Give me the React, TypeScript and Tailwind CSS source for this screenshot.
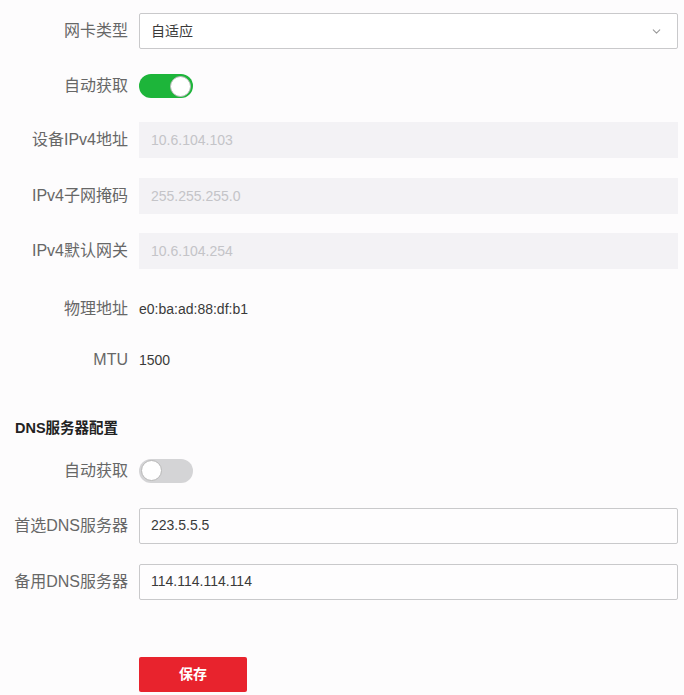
import { ChevronDown } from "lucide-react";

const cjk = "font-['Liberation_Sans','Noto_Sans_CJK_SC',sans-serif]";

function Label({ children }: { children: React.ReactNode }) {
  return (
    <div className="w-[139px] shrink-0 pr-[11px] text-right text-[16px] text-[#676767]">
      {children}
    </div>
  );
}

function Toggle({ on }: { on: boolean }) {
  return (
    <div
      className={
        on
          ? "flex h-[24px] w-[54px] items-center justify-end rounded-full bg-[#1db53a] px-[2px]"
          : "flex h-[24px] w-[54px] items-center justify-start rounded-full bg-[#d4d4d6] px-[2px]"
      }
    >
      <div className="h-[21px] w-[21px] rounded-full border border-[#b8b8b8] bg-white" />
    </div>
  );
}

function TextBox({ value }: { value: string }) {
  return (
    <div className="flex h-[36px] flex-1 items-center rounded-[2px] border border-[#c9c9cb] bg-[#fefdfe] pl-[11px] text-[14px] text-[#3a3a3a]">
      {value}
    </div>
  );
}

function Disabled({ value }: { value: string }) {
  return (
    <div className="flex h-[36px] flex-1 items-center bg-[#f3f2f5] pl-[12px] text-[14px] text-[#c4c4c8]">
      {value}
    </div>
  );
}

export default function App() {
  return (
    <div className={`min-h-[695px] w-[684px] bg-[#fdfcfd] pt-[13px] pr-[6px] ${cjk}`}>
      {/* NIC section */}
      <div className="flex h-[36px] items-center">
        <Label>网卡类型</Label>
        <div className="flex h-[36px] flex-1 items-center justify-between rounded-[2px] border border-[#c9c9cb] bg-white pl-[11px] pr-[14px] text-[14px] text-[#3a3a3a]">
          <span>自适应</span>
          <ChevronDown className="h-[13px] w-[13px] text-[#9a9a9a]" strokeWidth={2} />
        </div>
      </div>

      <div className="mt-[19px] flex h-[36px] items-center">
        <Label>自动获取</Label>
        <Toggle on />
      </div>

      <div className="mt-[18px] flex h-[36px] items-center">
        <Label>设备IPv4地址</Label>
        <Disabled value="10.6.104.103" />
      </div>

      <div className="mt-[20px] flex h-[36px] items-center">
        <Label>IPv4子网掩码</Label>
        <Disabled value="255.255.255.0" />
      </div>

      <div className="mt-[19px] flex h-[36px] items-center">
        <Label>IPv4默认网关</Label>
        <Disabled value="10.6.104.254" />
      </div>

      <div className="mt-[22px] flex h-[36px] items-center">
        <Label>物理地址</Label>
        <span className="text-[14px] text-[#3a3a3a]">e0:ba:ad:88:df:b1</span>
      </div>

      <div className="mt-[15px] flex h-[36px] items-center">
        <Label>MTU</Label>
        <span className="text-[14px] text-[#3a3a3a]">1500</span>
      </div>

      {/* DNS section */}
      <div className="mt-[40px] pl-[15px] text-[14.5px] font-bold text-[#222]">DNS服务器配置</div>

      <div className="mt-[13px] flex h-[36px] items-center">
        <Label>自动获取</Label>
        <Toggle on={false} />
      </div>

      <div className="mt-[19px] flex h-[36px] items-center">
        <Label>首选DNS服务器</Label>
        <TextBox value="223.5.5.5" />
      </div>

      <div className="mt-[20px] flex h-[36px] items-center">
        <Label>备用DNS服务器</Label>
        <TextBox value="114.114.114.114" />
      </div>

      <div className="mt-[57px] pl-[139px]">
        <button className="flex h-[35px] w-[108px] items-center justify-center rounded-[2px] bg-[#e8232d] text-[14px] font-bold text-white">
          保存
        </button>
      </div>
    </div>
  );
}
